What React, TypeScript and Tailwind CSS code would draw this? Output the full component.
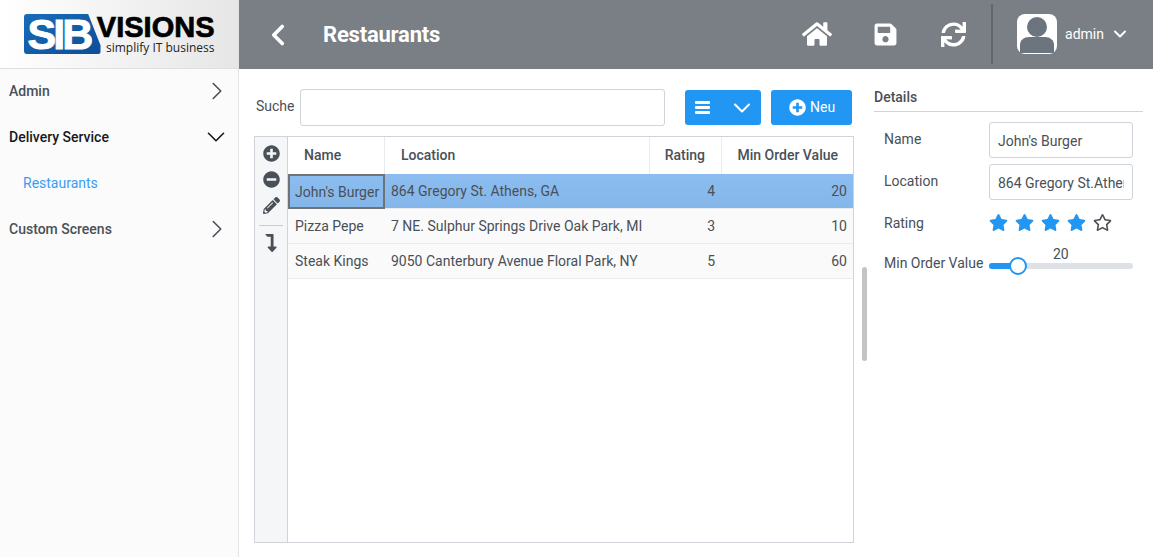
import { ChevronDown, ChevronLeft, ChevronRight } from "lucide-react";
import {
  FaHome,
  FaLevelDownAlt,
  FaMinusCircle,
  FaPencilAlt,
  FaPlusCircle,
  FaRegStar,
  FaSave,
  FaStar,
  FaSync,
} from "react-icons/fa";

const rows = [
  { name: "John's Burger", location: "864 Gregory St. Athens, GA", rating: 4, min: 20 },
  { name: "Pizza Pepe", location: "7 NE. Sulphur Springs Drive Oak Park, MI", rating: 3, min: 10 },
  { name: "Steak Kings", location: "9050 Canterbury Avenue Floral Park, NY", rating: 5, min: 60 },
];

const Logo = () => (
  <div className="flex h-10 w-[191px] items-stretch">
    <div className="flex h-10 w-[77px] shrink-0 items-center rounded-[3px] bg-gradient-to-br from-[#1a6cb8] to-[#0b4f98] [clip-path:polygon(0_0,84%_0,100%_78%,100%_100%,0_100%)]">
      <span className="ml-[4px] text-[43px] leading-none font-bold tracking-[-3px] text-white [font-family:'Liberation_Sans',sans-serif] [-webkit-text-stroke:1px_white]">
        SIB
      </span>
    </div>
    <div className="-ml-[5px] flex flex-1 flex-col items-end">
      <span className="text-[29px] leading-[27px] font-bold text-black [font-family:'Liberation_Sans',sans-serif] [-webkit-text-stroke:0.7px_black]">
        VISIONS
      </span>
      <span className="text-[12px] leading-[14px] text-[#222] [font-family:'Open_Sans',sans-serif]">
        simplify IT business
      </span>
    </div>
  </div>
);

const Avatar = () => (
  <svg width="40" height="40" viewBox="0 0 40 40">
    <rect width="40" height="40" rx="8" fill="#fff" />
    <circle cx="20" cy="13" r="10" fill="#6c757d" />
    <path d="M3 39v-8c0-5 4-8 9-8h16c5 0 9 3 9 8v8z" fill="#6c757d" />
  </svg>
);

const Sidebar = () => (
  <aside className="flex w-[239px] shrink-0 flex-col border-r border-[#e4e4e4] bg-[#fbfbfb]">
    <div className="flex h-[69px] items-center justify-center border-b border-[#dedede] bg-gradient-to-r from-white to-[#e6e6e6]">
      <Logo />
    </div>
    <nav className="-mt-px flex flex-col text-sm font-medium">
      <div className="flex h-[46px] items-center justify-between pr-[6px] pl-[9px] text-[#495057]">
        Admin
        <ChevronRight size={30} strokeWidth={1.3} />
      </div>
      <div className="flex h-[46px] items-center justify-between pr-[7px] pl-[9px] text-[#16191c]">
        Delivery Service
        <ChevronDown size={30} strokeWidth={1.3} />
      </div>
      <div className="flex h-[46px] items-center pl-[23px] font-normal text-[#3b9cf4]">Restaurants</div>
      <div className="flex h-[46px] items-center justify-between pr-[6px] pl-[9px] text-[#495057]">
        Custom Screens
        <ChevronRight size={30} strokeWidth={1.3} />
      </div>
    </nav>
  </aside>
);

const Header = () => (
  <header className="flex h-[69px] shrink-0 items-center bg-[#7a7e85] text-white">
    <ChevronLeft size={34} strokeWidth={2.6} className="ml-[22px]" />
    <h1 className="ml-[28px] text-[22px] font-bold tracking-[-0.2px]">Restaurants</h1>
    <div className="ml-auto flex items-center pb-px">
      <FaHome size={30} className="mr-[41px]" />
      <FaSave size={25} className="mr-[43px]" />
      <FaSync size={25} className="mr-[25px]" />
      <div className="mr-[24px] h-[60px] w-[2px] bg-[#62666d]" />
      <Avatar />
      <span className="ml-[8px] text-sm">admin</span>
      <ChevronDown size={20} strokeWidth={2.4} className="mr-[23px] ml-[6px]" />
    </div>
  </header>
);

const Toolbar = () => (
  <div className="flex w-[33px] shrink-0 flex-col items-center border-r border-[#ced4da] bg-[#f4f6f8] pt-[8px] text-[#495057]">
    <FaPlusCircle size={17} />
    <FaMinusCircle size={17} className="mt-[9px]" />
    <FaPencilAlt size={17} className="mt-[9px]" />
    <div className="mt-[11px] h-px w-[24px] bg-[#c8ccd0]" />
    <FaLevelDownAlt size={18} className="mt-[8px]" />
  </div>
);

const Table = () => (
  <div className="flex h-[407px] w-[600px] border border-[#ced4da]">
    <Toolbar />
    <div className="min-w-0 flex-1 text-sm text-[#495057]">
      <div className="grid h-[37px] grid-cols-[97px_265px_72px_1fr] pb-[2px] font-medium">
        <div className="-mb-[2px] flex items-center border-r border-[#e9ecef] pb-[2px] pl-[16px]">Name</div>
        <div className="-mb-[2px] flex items-center border-r border-[#e9ecef] pb-[2px] pl-[16px]">Location</div>
        <div className="-mb-[2px] flex items-center justify-end border-r border-[#e9ecef] pr-[16px] pb-[2px]">Rating</div>
        <div className="flex items-center justify-end pr-[15px]">Min Order Value</div>
      </div>
      {rows.map((row, i) => (
        <div
          key={row.name}
          className={
            i === 0
              ? "grid h-[35px] grid-cols-[97px_265px_72px_1fr] border-b border-[#e9ecef] bg-gradient-to-b from-[#8cbdf0] to-[#85b6ea]"
              : "grid h-[35px] grid-cols-[97px_265px_72px_1fr] border-b border-[#e9ecef] bg-[#fafafa]"
          }
        >
          <div className={i === 0 ? "-mb-px flex items-center border-2 border-[#6e7378] pl-[5px] whitespace-nowrap" : "flex items-center pl-[7px] whitespace-nowrap"}>
            {row.name}
          </div>
          <div className="flex items-center pl-[6px] whitespace-nowrap">{row.location}</div>
          <div className="flex items-center justify-end pr-[7px]">{row.rating}</div>
          <div className="flex items-center justify-end pr-[6px]">{row.min}</div>
        </div>
      ))}
    </div>
  </div>
);

const Details = () => (
  <section className="flex w-[269px] shrink-0 flex-col pt-[19px] text-sm text-[#495057]">
    <h2 className="flex h-[24px] items-center border-b border-[#ced4da] pb-[5px] font-medium">Details</h2>
    <div className="mt-[10px] flex flex-col pr-[10px] pl-[10px]">
      <label className="flex h-[36px] items-start justify-between pt-[7px]">
        Name
        <input
          readOnly
          value="John's Burger"
          className="-mt-[7px] h-[36px] w-[144px] rounded-[3px] border border-[#ced4da] pt-[2px] pr-[8px] pl-[8px] text-sm text-[#495057] outline-none"
        />
      </label>
      <label className="mt-[6px] flex h-[36px] items-start justify-between pt-[7px]">
        Location
        <input
          readOnly
          value="864 Gregory St.Athens, GA"
          className="-mt-[7px] h-[36px] w-[144px] rounded-[3px] border border-[#ced4da] pt-[2px] pr-[8px] pl-[8px] text-sm text-[#495057] outline-none"
        />
      </label>
      <div className="mt-[13px] flex h-[20px] items-center justify-between">
        Rating
        <div className="-mt-[2px] flex w-[144px] gap-[7px]">
          {[1, 2, 3, 4].map((n) => (
            <FaStar key={n} size={19} className="text-[#2196f3]" />
          ))}
          <FaRegStar size={19} className="text-[#495057]" />
        </div>
      </div>
      <div className="mt-[20px] flex h-[20px] items-center justify-between">
        Min Order Value
        <div className="relative mt-[5px] h-[6px] w-[144px] rounded-[3px] bg-[#dee2e6]">
          <div className="h-[6px] w-[29px] rounded-l-[3px] bg-[#2196f3]" />
          <div className="absolute top-[-6px] left-[20px] h-[18px] w-[18px] rounded-full border-2 border-[#2196f3] bg-white" />
          <span className="absolute top-[-19px] left-[64px]">20</span>
        </div>
      </div>
    </div>
  </section>
);

export default function App() {
  return (
    <div className="flex h-[557px] w-[1153px] overflow-hidden bg-white text-sm [font-family:Roboto,sans-serif]">
      <Sidebar />
      <div className="flex min-w-0 flex-1 flex-col">
        <Header />
        <main className="relative flex flex-1">
          <div className="w-[635px] shrink-0 pt-[20px] pl-[15px]">
            <div className="flex h-[47px] items-start">
              <span className="ml-[2px] w-[44px] pt-[7px] text-[#495057]">Suche</span>
              <input className="h-[37px] w-[365px] rounded-[3px] border border-[#ced4da] outline-none" />
              <div className="mt-[1px] ml-[20px] flex h-[35px] w-[76px] items-center justify-between rounded-[3px] bg-[#2196f3] pr-[5px] pl-[10px] text-white">
                <span className="flex flex-col gap-[2px]">
                  <span className="h-[3px] w-[15px] rounded-[1px] bg-white" />
                  <span className="h-[3px] w-[15px] rounded-[1px] bg-white" />
                  <span className="h-[3px] w-[15px] rounded-[1px] bg-white" />
                </span>
                <ChevronDown size={28} strokeWidth={1.8} />
              </div>
              <div className="mt-[1px] ml-[10px] flex h-[35px] w-[81px] items-center rounded-[3px] bg-[#2196f3] pb-px pl-[18px] text-white">
                <FaPlusCircle size={17} />
                <span className="ml-[4px]">Neu</span>
              </div>
            </div>
            <Table />
          </div>
          <Details />
          <div className="absolute top-[198px] left-[623px] h-[94px] w-[5px] rounded-[3px] bg-[#c4c4c4]" />
        </main>
      </div>
    </div>
  );
}
